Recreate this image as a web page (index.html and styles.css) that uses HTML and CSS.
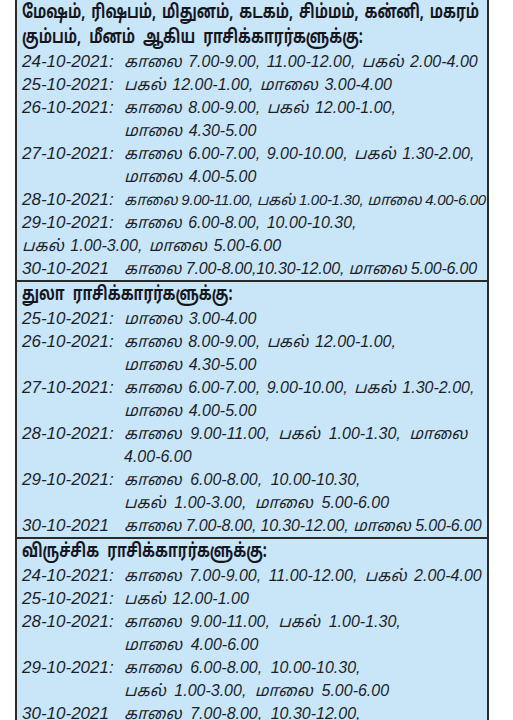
FILE: index.html
```html
<!DOCTYPE html>
<html lang="ta">
<head>
<meta charset="utf-8">
<title>ராசி நேரங்கள்</title>
<link rel="stylesheet" href="styles.css">
</head>
<body>
<div class="box">
  <section class="sec">
    <div class="head"><span class="hs wide">மேஷம், ரிஷபம், மிதுனம், கடகம், சிம்மம், கன்னி, மகரம்</span></div>
    <div class="head"><span class="hs">கும்பம், மீனம் ஆகிய ராசிக்காரர்களுக்கு:</span></div>
    <div class="row"><span class="date">24-10-2021:</span><span class="t">காலை 7.00-9.00, 11.00-12.00, பகல் 2.00-4.00</span></div>
    <div class="row"><span class="date">25-10-2021:</span><span class="t">பகல் 12.00-1.00, மாலை 3.00-4.00</span></div>
    <div class="row"><span class="date">26-10-2021:</span><span class="t">காலை 8.00-9.00, பகல் 12.00-1.00,</span></div>
    <div class="row"><span class="date"></span><span class="t">மாலை 4.30-5.00</span></div>
    <div class="row"><span class="date">27-10-2021:</span><span class="t">காலை 6.00-7.00, 9.00-10.00, பகல் 1.30-2.00,</span></div>
    <div class="row"><span class="date"></span><span class="t">மாலை 4.00-5.00</span></div>
    <div class="row"><span class="date">28-10-2021:</span><span class="t tight">காலை 9.00-11.00, பகல் 1.00-1.30, மாலை 4.00-6.00</span></div>
    <div class="row"><span class="date">29-10-2021:</span><span class="t">காலை 6.00-8.00, 10.00-10.30,</span></div>
    <div class="row"><span class="t">பகல் 1.00-3.00, மாலை 5.00-6.00</span></div>
    <div class="row"><span class="date">30-10-2021</span><span class="t snug">காலை 7.00-8.00,10.30-12.00, மாலை 5.00-6.00</span></div>
  </section>
  <section class="sec">
    <div class="head"><span class="hs">துலா ராசிக்காரர்களுக்கு:</span></div>
    <div class="row"><span class="date">25-10-2021:</span><span class="t">மாலை 3.00-4.00</span></div>
    <div class="row"><span class="date">26-10-2021:</span><span class="t">காலை 8.00-9.00, பகல் 12.00-1.00,</span></div>
    <div class="row"><span class="date"></span><span class="t">மாலை 4.30-5.00</span></div>
    <div class="row"><span class="date">27-10-2021:</span><span class="t">காலை 6.00-7.00, 9.00-10.00, பகல் 1.30-2.00,</span></div>
    <div class="row"><span class="date"></span><span class="t">மாலை 4.00-5.00</span></div>
    <div class="row"><span class="date">28-10-2021:</span><span class="t wide">காலை 9.00-11.00, பகல் 1.00-1.30, மாலை</span></div>
    <div class="row"><span class="date"></span><span class="t">4.00-6.00</span></div>
    <div class="row"><span class="date">29-10-2021:</span><span class="t wide">காலை 6.00-8.00, 10.00-10.30,</span></div>
    <div class="row"><span class="date"></span><span class="t wide">பகல் 1.00-3.00, மாலை 5.00-6.00</span></div>
    <div class="row"><span class="date">30-10-2021</span><span class="t snug">காலை 7.00-8.00, 10.30-12.00, மாலை 5.00-6.00</span></div>
  </section>
  <section class="sec">
    <div class="head"><span class="hs">விருச்சிக ராசிக்காரர்களுக்கு:</span></div>
    <div class="row"><span class="date">24-10-2021:</span><span class="t mid">காலை 7.00-9.00, 11.00-12.00, பகல் 2.00-4.00</span></div>
    <div class="row"><span class="date">25-10-2021:</span><span class="t">பகல் 12.00-1.00</span></div>
    <div class="row"><span class="date">28-10-2021:</span><span class="t wide">காலை 9.00-11.00, பகல் 1.00-1.30,</span></div>
    <div class="row"><span class="date"></span><span class="t wide">மாலை 4.00-6.00</span></div>
    <div class="row"><span class="date">29-10-2021:</span><span class="t wide">காலை 6.00-8.00, 10.00-10.30,</span></div>
    <div class="row"><span class="date"></span><span class="t wide">பகல் 1.00-3.00, மாலை 5.00-6.00</span></div>
    <div class="row"><span class="date">30-10-2021</span><span class="t wide">காலை 7.00-8.00, 10.30-12.00,</span></div>
  </section>
</div>
</body>
</html>
```
FILE: styles.css
```css
html, body {
  margin: 0;
  padding: 0;
  background: #ffffff;
}
body {
  height: 720px;
  overflow: hidden;
}
.box {
  margin-left: 15px;
  width: 470px;
  border: 2px solid #2a2a2a;
  border-top: none;
  background: #c9e6f8;
  color: #1c1f2a;
}
.sec {
  border-bottom: 2px solid #2a2a2a;
}
.head {
  font-family: "Noto Sans Tamil", "Lohit Tamil", "Latha", "Noto Sans", sans-serif;
  font-weight: bold;
  font-size: 19px;
  line-height: 25px;
  height: 25px;
  padding-left: 5px;
  padding-top: 1px;
  margin-bottom: -1px;
  white-space: nowrap;
  overflow: hidden;
  color: #15171f;
}
.hs {
  display: inline-block;
  transform: scaleX(0.745);
  transform-origin: left center;
  word-spacing: 6px;
}
.hs.wide {
  word-spacing: 3px;
}
.row {
  display: flex;
  align-items: baseline;
  height: 23px;
  line-height: 23px;
  padding-left: 5px;
  font-family: "Liberation Sans", "Noto Sans Tamil", "Lohit Tamil", sans-serif;
  font-style: italic;
  white-space: nowrap;
  overflow: hidden;
}
.date {
  flex: 0 0 102px;
  font-size: 17px;
}
.t {
  font-size: 16px;
  word-spacing: 2px;
}
.t.wide {
  word-spacing: 4px;
}
.t.mid {
  word-spacing: 3px;
}
.t.snug {
  word-spacing: 0;
  letter-spacing: -0.15px;
}
.t.tight {
  font-size: 15px;
  word-spacing: 0;
  letter-spacing: -0.3px;
}
```
